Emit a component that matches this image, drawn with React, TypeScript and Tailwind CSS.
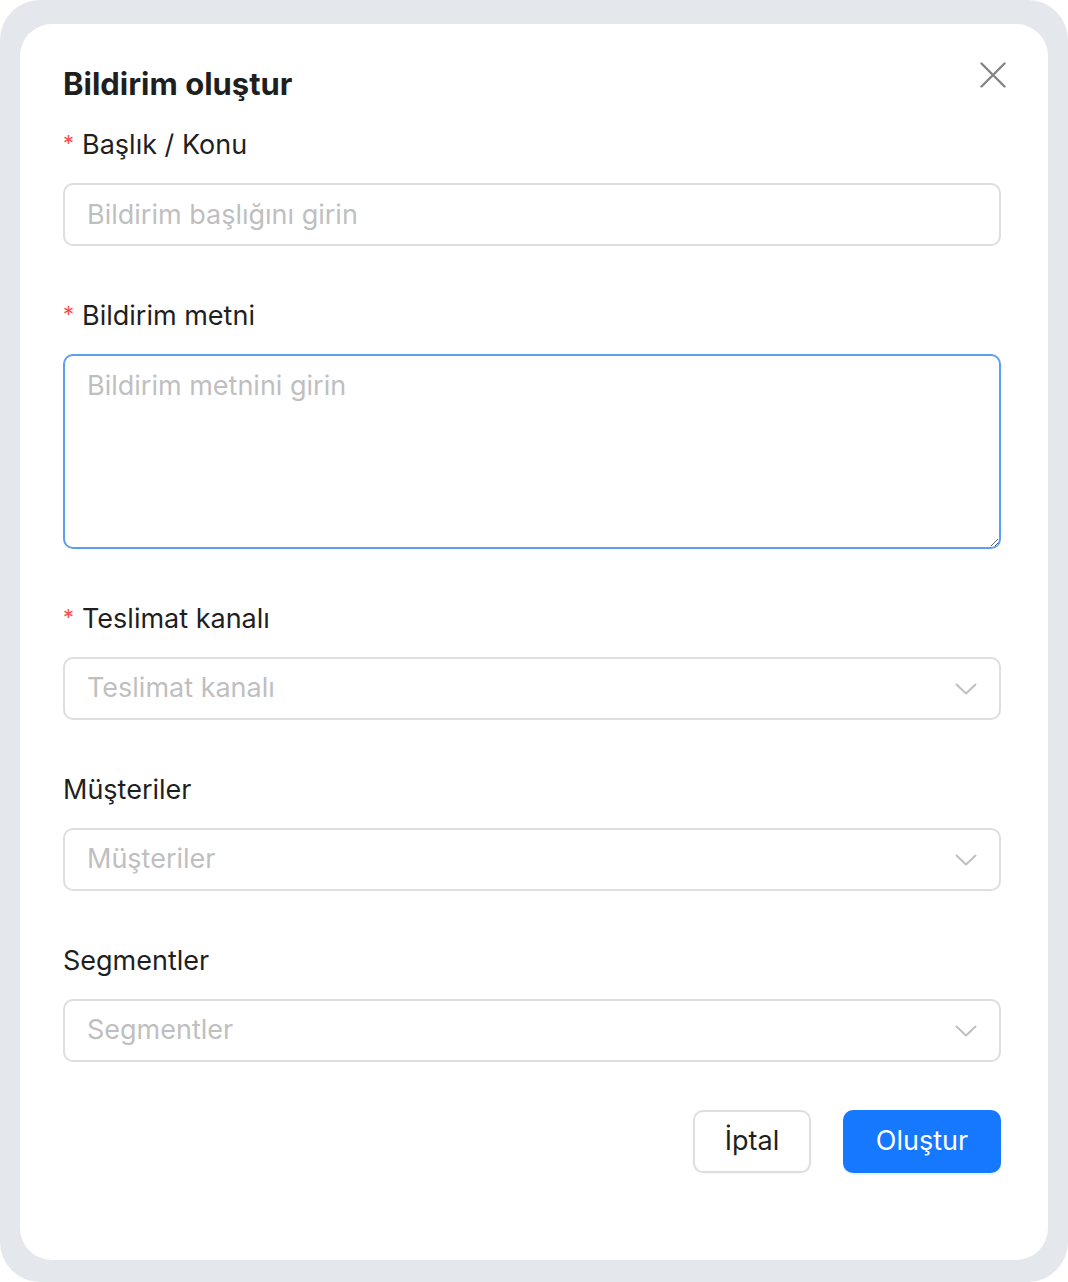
import React from "react";

const font = { fontFamily: "Inter, 'Noto Sans', sans-serif" };

function Label({ text, required }: { text: string; required?: boolean }) {
  return (
    <div className="flex items-center h-[44px] mb-[16px] text-[27px] leading-[44px] text-[#1f1f1f]">
      {required && (
        <span className="text-[#ff4d4f] text-[22px] mr-[8px] leading-none relative top-[-2px]">*</span>
      )}
      <span>{text}</span>
    </div>
  );
}

function Chevron() {
  return (
    <svg width="22" height="12" viewBox="0 0 22 12" fill="none">
      <path d="M1.5 1.5 L11 10.5 L20.5 1.5" stroke="#bfbfbf" strokeWidth="2" strokeLinecap="round" strokeLinejoin="round" />
    </svg>
  );
}

function SelectBox({ placeholder }: { placeholder: string }) {
  return (
    <div className="flex items-center justify-between h-[63px] rounded-[10px] border-2 border-[#dedede] bg-white pl-[22px] pr-[22px]">
      <span className="text-[27px] text-[#bfbfbf]">{placeholder}</span>
      <Chevron />
    </div>
  );
}

export default function App() {
  return (
    <div className="w-[1068px] h-[1282px] bg-white" style={font}>
      <div className="h-full rounded-[40px] bg-[#e4e7eb] pt-[24px] px-[20px] pb-[22px]">
        <div className="relative h-full rounded-[32px] bg-white pl-[43px] pr-[47px] pt-[40px]">
          <button className="absolute right-[41px] top-[37px] w-[28px] h-[28px] flex items-center justify-center">
            <svg width="26" height="26" viewBox="0 0 26 26" fill="none">
              <path d="M1.5 1.5 L24.5 24.5 M24.5 1.5 L1.5 24.5" stroke="#858585" strokeWidth="2.4" strokeLinecap="round" />
            </svg>
          </button>
          <h2 className="text-[31px] leading-[40px] font-bold text-[#1f1f1f] mb-[19px]">Bildirim oluştur</h2>

          <Label text="Başlık / Konu" required />
          <input
            className="w-full h-[63px] rounded-[10px] border-2 border-[#dedede] px-[22px] text-[27px] outline-none placeholder:text-[#bfbfbf]"
            placeholder="Bildirim başlığını girin"
          />

          <div className="mt-[48px]">
            <Label text="Bildirim metni" required />
            <textarea
              className="block w-full h-[195px] rounded-[10px] border-2 border-[#5b9ff0] px-[22px] py-[12px] text-[27px] leading-[36px] outline-none placeholder:text-[#bfbfbf]"
              placeholder="Bildirim metnini girin"
            />
          </div>

          <div className="mt-[48px]">
            <Label text="Teslimat kanalı" required />
            <SelectBox placeholder="Teslimat kanalı" />
          </div>

          <div className="mt-[48px]">
            <Label text="Müşteriler" />
            <SelectBox placeholder="Müşteriler" />
          </div>

          <div className="mt-[48px]">
            <Label text="Segmentler" />
            <SelectBox placeholder="Segmentler" />
          </div>

          <div className="flex justify-end gap-[32px] mt-[48px]">
            <button className="h-[63px] w-[118px] rounded-[10px] border-2 border-[#dedede] bg-white text-[27px] text-[#1f1f1f] shadow-[0_2px_0_rgba(0,0,0,0.02)]">
              İptal
            </button>
            <button className="h-[63px] w-[158px] rounded-[10px] bg-[#1677ff] text-[27px] text-white shadow-[0_2px_0_rgba(5,145,255,0.1)]">
              Oluştur
            </button>
          </div>
        </div>
      </div>
    </div>
  );
}
